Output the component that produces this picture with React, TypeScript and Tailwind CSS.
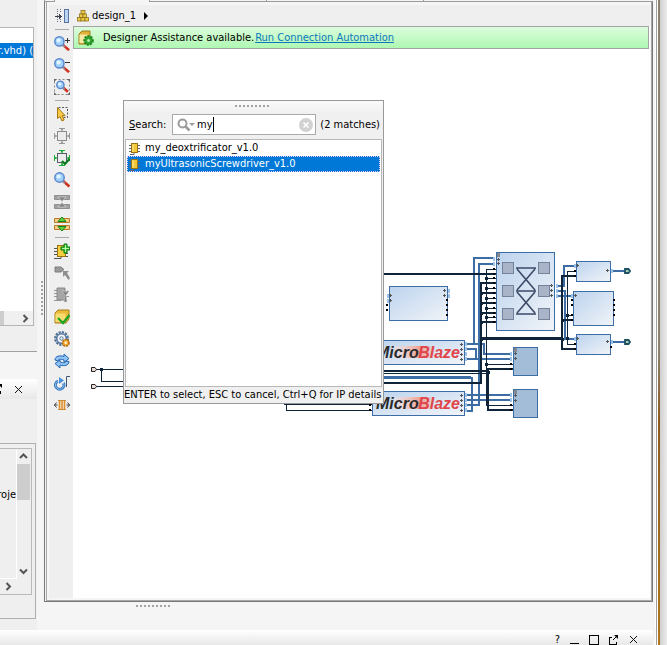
import React, { useState } from "react";

type IconProps = { children: React.ReactNode; crisp?: boolean };

function Icon16({ children, crisp }: IconProps) {
  return (
    <svg width="16" height="16" viewBox="0 0 16 16" fill="none" className="block shrink-0" shapeRendering={crisp ? "crispEdges" : "auto"} aria-hidden="true">
      {children}
    </svg>
  );
}

function Lens({ x = 0, y = 0, r = 4.6 }: { x?: number; y?: number; r?: number }) {
  const c = r + 0.8;
  return (
    <g transform={`translate(${x} ${y})`}>
      <path d={`M${c + r * 0.7} ${c + r * 0.7}L${c + r * 2.1} ${c + r * 1.9}`} stroke="#d0301c" strokeWidth="2.6" />
      <path d={`M${c + r * 0.7} ${c + r * 0.7 + 0.6}L${c + r * 1.2} ${c + r * 1.1 + 0.6}`} stroke="#8a95a5" strokeWidth="1.6" />
      <circle cx={c} cy={c} r={r} fill="#9fd2fb" stroke="#5d87cc" strokeWidth="1.5" />
      <circle cx={c - 0.8} cy={c - 1} r={r * 0.45} fill="#e3f5ff" />
    </g>
  );
}

function DockIcon() {
  return (
    <Icon16 crisp>
      <path d="M3 1v14M6 1v4M6 11v4" stroke="#6d737c" strokeDasharray="1 1" />
      <path d="M1 8h6" stroke="#39424e" />
      <path d="M5 5.5h1v1h1v1h1v1h-1v1h-1v1h-1z" fill="#39424e" />
      <rect x="10.5" y="1.5" width="4" height="13" fill="#b9d5f5" stroke="#58749c" />
    </Icon16>
  );
}

function ZoomInIcon() {
  return <Icon16><Lens y={1} /><path d="M13.5 3v5M11 5.5h5" stroke="#333" strokeWidth="1" shapeRendering="crispEdges" /></Icon16>;
}
function ZoomOutIcon() {
  return <Icon16><Lens y={1} /><path d="M11 5.5h5" stroke="#333" strokeWidth="1" shapeRendering="crispEdges" /></Icon16>;
}
function ZoomFitIcon() {
  return (
    <Icon16>
      <rect x="0.5" y="0.5" width="15" height="15" stroke="#888" strokeDasharray="2 2" />
      <path d="M0 0h3L0 3zM16 0v3l-3-3zM0 16v-3l3 3zM16 16h-3l3-3z" fill="#666" />
      <Lens x={2} y={1.5} r={3.6} />
    </Icon16>
  );
}
function SelectAreaIcon() {
  return (
    <Icon16>
      <rect x="4.5" y="1.5" width="9" height="10" stroke="#555" strokeDasharray="2 1.5" />
      <path d="M3.5 1.5v11l2.5-2 2 4.5 2.2-1-2-4.3h3z" fill="#f8ca45" stroke="#a77612" />
    </Icon16>
  );
}
function FitSelectionIcon({ color, arrow, check }: { color: string; arrow: string; check?: boolean }) {
  return (
    <Icon16>
      <rect x="3.5" y="3.5" width="9" height="9" fill="#ececec" stroke={color} />
      <path d="M5 0h6v1H9v1l-1 1.500L7 2V1H5zM5 16h6v-1H9v-1l-1-1.500L7 14v1H5zM0 5v6h1V9h1l1.500-1L2 7H1V5zM16 5v6h-1V9h-1l-1.500-1L14 7h1V5z" fill={arrow} />
      {check && <path d="M8 11l3 3 4.5-5" stroke="#0b7a1c" strokeWidth="2.2" />}
    </Icon16>
  );
}
function SearchIcon() {
  return <Icon16><Lens r={4.7} /></Icon16>;
}
function CollapseIcon() {
  return (
    <Icon16>
      <path d="M0.5 1.5h15v4h-15zM0.5 10.5h15v4h-15z" fill="#a2a2a2" stroke="#909090" />
      <path d="M4 3h8l-4 4.500zM4 13h8L8 8.500z" fill="#828282" stroke="#e0e0e0" strokeWidth="0.6" />
    </Icon16>
  );
}
function ExpandIcon() {
  return (
    <Icon16>
      <path d="M0.5 2.5h15v4h-15zM0.5 9.5h15v4h-15z" fill="#f8cf87" stroke="#bd7923" />
      <path d="M4 5.5h8L8 1zM4 10.5h8L8 15z" fill="#62d23c" stroke="#16801c" />
    </Icon16>
  );
}
function AddIpIcon() {
  return (
    <Icon16>
      <path d="M0 5.5h3M0 8.5h3M0 11.5h3M11 10.5h3M0 15.5h7v-2M12 13.5h2" stroke="#555" />
      <rect x="3.5" y="2.5" width="8" height="11" fill="#f6cf3e" stroke="#9b7412" />
      <path d="M10 1h3v3h3v3h-3v3h-3V7H7V4h3z" fill="#38c935" stroke="#0d7614" />
      <path d="M11.5 2v7M8 5.5h7" stroke="#baf6a4" />
    </Icon16>
  );
}
function PortIcon() {
  return (
    <Icon16>
      <path d="M1 2h6l3 2.5L7 7H1z" fill="#9a9a9a" stroke="#7d7d7d" />
      <path d="M9 6h6l-2 2 3 5-1.5 2-3.5-5-2 2z" fill="#8f8f8f" />
    </Icon16>
  );
}
function CustomizeIcon() {
  return (
    <Icon16>
      <path d="M0 3.5h3M0 6.5h3M0 9.5h3M0 13.5h7M11 4.5h4M11 9.5h4" stroke="#999" />
      <path d="M3 1h8v12H3z" fill="#a6a6a6" stroke="#8a8a8a" />
      <path d="M9 3v3l2 2-1 7h3l-1-7 2-2V3l-1.5 2h-2z" fill="#808080" stroke="#d5d5d5" strokeWidth="0.5" />
    </Icon16>
  );
}
function ValidateIcon() {
  return (
    <Icon16>
      <path d="M1 4l3-3h11v9l-3 4H1z" fill="#e9ba3b" stroke="#a57c17" />
      <path d="M1.5 4.5h10V13h-10z" fill="#f8dc70" />
      <path d="M4 9l5 5 6.5-8" stroke="#18a325" strokeWidth="2.2" />
    </Icon16>
  );
}
function GearsIcon() {
  return (
    <Icon16>
      <circle cx="7.5" cy="7.5" r="6.4" stroke="#4d6d93" strokeWidth="2" strokeDasharray="2.2 1.1" />
      <circle cx="7.5" cy="7.5" r="4.8" fill="#f2f6fb" stroke="#57779f" strokeWidth="1.6" />
      <circle cx="7.5" cy="7.5" r="1.7" stroke="#57779f" />
      <circle cx="11.8" cy="11.8" r="3.3" fill="#f6ab2e" stroke="#b56a12" strokeWidth="1.5" strokeDasharray="2 0.8" />
      <circle cx="11.8" cy="11.8" r="1.2" fill="#fff4dd" />
    </Icon16>
  );
}
function RefreshIcon() {
  return (
    <Icon16>
      <path d="M1 7c0-4 5-5 9-3.5V1l5 4.5-5 4V7C7 6 4 6 4 8z" fill="#8fc2f5" stroke="#2467b0" />
      <path d="M15 8.5c0 4-5 5-9 3.5V15l-5-4.5 5-3.5v2c3 1 6 1 6-1z" fill="#8fc2f5" stroke="#2467b0" />
    </Icon16>
  );
}
function RegenerateIcon() {
  return (
    <Icon16>
      <path d="M12.5 12V1.5H16" stroke="#3f5976" />
      <path d="M4 6a4.300 4.300 0 1 0 5.500 2" stroke="#2f74bd" strokeWidth="2.8" />
      <path d="M4 6a4.300 4.300 0 1 0 5.500 2" stroke="#90c4f4" strokeWidth="1" />
      <path d="M5 2l5 3.500L5 9z" fill="#4a91da" />
    </Icon16>
  );
}
function SpreadIcon() {
  return (
    <Icon16>
      <path d="M5.500 4v8M8 4v8M10.500 4v8" stroke="#e0902a" strokeWidth="1.600" />
      <path d="M4 3.5h8M4 12.5h8" stroke="#c98a38" />
      <path d="M0 8h3.500M12.500 8H16M2.500 5.500L0.500 8l2 2.500M13.500 5.500L15.500 8l-2 2.500" stroke="#444" />
    </Icon16>
  );
}

function ChipIcon() {
  return (
    <svg width="13" height="13" viewBox="0 0 13 13" fill="none" className="block shrink-0" aria-hidden="true">
      <path d="M1 3.5h2M1 6.5h2M1 9.5h2M9 3.5h3M9 6.5h3M9 9.5h3M2 12.5h4v-2" stroke="#666" />
      <rect x="3.5" y="1.5" width="6" height="9" fill="#f3c838" stroke="#9a7316" />
      <path d="M5 2.5v7" stroke="#fbe899" />
    </svg>
  );
}

function Separator() {
  return <div className="flex h-[5px] w-[14px] items-center"><div className="h-px w-full bg-[#a9a9a9]" /></div>;
}

const tools: ([string, React.ReactNode] | null)[] = [
  ["Dock", <DockIcon />],
  null,
  ["Zoom in", <ZoomInIcon />],
  ["Zoom out", <ZoomOutIcon />],
  ["Zoom fit", <ZoomFitIcon />],
  null,
  ["Select area", <SelectAreaIcon />],
  ["Fit selection", <FitSelectionIcon color="#8c8c8c" arrow="#9a9a9a" />],
  ["Autofit selection", <FitSelectionIcon color="#555e68" arrow="#1cae3c" check />],
  ["Search", <SearchIcon />],
  ["Collapse all", <CollapseIcon />],
  ["Expand all", <ExpandIcon />],
  null,
  ["Add IP", <AddIpIcon />],
  ["Make external", <PortIcon />],
  ["Customize block", <CustomizeIcon />],
  ["Validate design", <ValidateIcon />],
  ["Settings", <GearsIcon />],
  ["Refresh", <RefreshIcon />],
  ["Regenerate layout", <RegenerateIcon />],
  ["Optimize routing", <SpreadIcon />],
];

function Grip({ vertical }: { vertical?: boolean }) {
  return (
    <div className={vertical ? "flex flex-col gap-0.5" : "flex gap-0.5"}>
      {Array.from({ length: 9 }, (_, i) => <span key={i} className="size-0.5 bg-[#a3a3a3]" />)}
    </div>
  );
}

function Chevron({ dir }: { dir: "up" | "down" | "right" }) {
  const d = { up: "M1 6l3.5-3.5L8 6", down: "M1 2.5L4.5 6 8 2.5", right: "M2.5 1L6 4.5 2.5 8" }[dir];
  return <svg width="9" height="9" viewBox="0 0 9 9" fill="none" className="block" aria-hidden="true"><path d={d} stroke="#555" strokeWidth="2" /></svg>;
}

function CloseGlyph() {
  return <svg width="9" height="9" viewBox="0 0 9 9" className="block" aria-hidden="true"><path d="M1 1l7 7M8 1L1 8" stroke="#111" /></svg>;
}
function FloatGlyph() {
  return (
    <svg width="10" height="10" viewBox="0 0 10 10" fill="none" className="block shrink-0" aria-hidden="true">
      <path d="M3 2.5H0.5v7h7V7" stroke="#000" shapeRendering="crispEdges" />
      <path d="M5 0h4v4z" fill="#000" /><path d="M4 5l4-4" stroke="#000" />
    </svg>
  );
}

/* Left side: source list and properties panels */
function SidePanels() {
  return (
    <aside className="flex w-11 shrink-0 bg-[#f5f5f5]">
      <div className="flex w-[37px] shrink-0 flex-col overflow-hidden bg-[#efefef]">
        <div className="h-[27px] shrink-0" />
        <div className="flex h-[299px] w-[34px] shrink-0 flex-col border-y border-r border-[#b5b5b5] bg-white">
          <div className="mt-[15px] flex h-[15px] items-center justify-end overflow-hidden whitespace-pre bg-[#0078d7] text-white">r.vhd) (</div>
          <div className="flex-1" />
          <div className="flex h-[14px] bg-[#f0f0f0]">
            <div className="w-1 bg-[#cdcdcd]" />
            <button type="button" aria-label="Scroll right" className="ml-auto flex w-[15px] items-center justify-center"><Chevron dir="right" /></button>
          </div>
        </div>
        <div className="h-[25px] shrink-0" />
        <div className="h-px shrink-0 bg-[#a0a0a0]" />
        <div className="h-[27px] shrink-0 bg-[#f5f5f5]" />
        <div className="flex h-5 shrink-0 items-center justify-end gap-[11px] bg-linear-to-b from-white to-[#e8e8e8] pr-[14px]">
          <button type="button" aria-label="Float panel"><FloatGlyph /></button>
          <button type="button" aria-label="Close panel"><CloseGlyph /></button>
        </div>
        <div className="h-11 shrink-0" />
        <div className="h-[176px] w-[36px] shrink-0 border-y border-r border-[#b0b0b0] py-1 pr-[3px]">
          <div className="flex h-[147px] border-y border-r border-[#b9b9b9]">
            <div className="flex w-[17px] flex-col overflow-hidden">
              <div className="flex flex-1 justify-end border-r border-b border-white pt-[39px]">roje</div>
              <button type="button" aria-label="Scroll right" className="flex h-[15px] items-center justify-center"><Chevron dir="right" /></button>
            </div>
            <div className="flex w-[13px] flex-col items-center pb-[15px]">
              <button type="button" aria-label="Scroll up" className="flex h-[15px] items-center"><Chevron dir="up" /></button>
              <div className="h-9 w-full bg-[#cdcdcd]" />
              <button type="button" aria-label="Scroll down" className="mt-auto flex h-[15px] items-center"><Chevron dir="down" /></button>
            </div>
          </div>
        </div>
      </div>
      <div className="flex w-[7px] justify-center pt-[281px] pl-[3px]"><Grip vertical /></div>
    </aside>
  );
}

const BUS = "#3c6ea5";
const NET = "#0f2438";

type Wire = [string, number];
const busWires: Wire[] = [
  ["M384 378H472V411H466", 2], ["M384 377H471", 3], ["M466 344H474V258H494", 2], ["M466 405H479V264H494", 2],
  ["M466 344H484V354H511", 2], ["M466 349H476V359H511", 2], ["M466 359H511", 2],
  ["M466 395H511", 2], ["M466 400H511", 2], ["M557 286H564V266H575", 2], ["M557 291H565V339H575", 2],
  ["M557 296H573", 2], ["M612 271H625", 2], ["M612 342H625", 2],
];
const netWires: Wire[] = [
  ["M384 274H496", 2], ["M384 371H488V410H513", 2], ["M384 373.5H486", 1], ["M384 383H481V283H496", 2],
  ["M481 339H562V276H576M562 339V349H576M562 320H573", 2], ["M481 338.5H562", 3], ["M496 269.5H486.5V405.5H513", 1],
  ["M486.5 364.5H513", 1], ["M576 271.5H567.5V344.5H576M567.5 315.5H573", 1],
  ["M488 371V369H513", 2],
  ["M481 293H496M481 303H496M481 313H496M481 322H496", 2],
  ["M486.5 278.5H496M486.5 288.5H496M486.5 298.5H496M486.5 308.5H496M486.5 317.5H496", 1],
  ["M96 369.5H124M101.5 369.5V381.5H124M96 386.5H124", 1],
  ["M284 404.5H372M286.5 404V410.5H372", 1],
];
const junctions = [
  [101, 369], [481, 293], [481, 303], [481, 313], [481, 322], [481, 339], [486, 278], [486, 288], [486, 298],
  [486, 308], [486, 317], [486, 338], [486, 364], [488, 372], [562, 320], [562, 339], [567, 315], [567, 338],
];
const pins = [
  ...[269, 274, 278, 283, 288, 293, 298, 303, 308, 313, 317, 322].map((y) => [494, y]),
  ...[364, 369, 405, 410].map((y) => [511, y]),
  ...[305, 310].map((y) => [387, y]), ...[300, 305, 310, 315].map((y) => [447, y]),
  ...[300, 305, 315, 320].map((y) => [572, y]), ...[300, 305, 310, 315].map((y) => [614, y]),
  [575, 271], [575, 276], [575, 344], [575, 349], [611, 347], [370, 405], [370, 410],
];
const busPins = [
  [493, 259], [493, 264], [387, 296], [387, 301], [448, 291], [448, 296], [465, 344], [465, 349], [465, 354], [465, 359],
  [465, 395], [465, 400], [465, 405], [465, 410], [510, 354], [510, 359], [510, 395], [510, 400], [556, 286],
  [556, 291], [556, 296], [574, 266], [571, 296], [574, 339], [611, 271], [611, 342],
];
const expanders = [
  [390, 295], [390, 300], [444, 290], [444, 295], [461, 344], [461, 349], [461, 354], [461, 359], [461, 395], [461, 400],
  [461, 405], [461, 410], [498, 259], [498, 263], [551, 285], [551, 290], [551, 295], [577, 265], [607, 270], [575, 295],
  [577, 338], [607, 341], [515, 353], [515, 358], [515, 395], [515, 400],
];

function MicroBlaze({ y }: { y: number }) {
  return (
    <g>
      <rect x="372.5" y={y + 0.5} width="92" height="24" rx="1" fill="url(#block)" stroke={BUS} shapeRendering="crispEdges" />
      <rect x="394" y={y + 6} width="42" height="12" fill="url(#glow)" />
      <text x="376" y={y + 18} fontFamily="Liberation Sans, sans-serif" fontWeight="bold" fontStyle="italic" fontSize="16" fill="#2b2b2b">Micro</text>
      <text x="460" y={y + 18} textAnchor="end" fontFamily="Liberation Sans, sans-serif" fontWeight="bold" fontStyle="italic" fontSize="16" fill="#e0454a">Blaze</text>
    </g>
  );
}

function BlockDiagram() {
  return (
    <svg width="577" height="550" viewBox="73 49 577 550" fill="none" className="absolute top-0 left-0" role="img" aria-label="Block design">
      <defs>
        <linearGradient id="block" x1="0" y1="0" x2="1" y2="1"><stop offset="0" stopColor="#bcd3ee" /><stop offset="1" stopColor="#f1f4f8" /></linearGradient>
        <linearGradient id="glow" x1="0" y1="0" x2="1" y2="0"><stop offset="0" stopColor="#fbe3dd" stopOpacity="0.4" /><stop offset="0.6" stopColor="#f2a193" /><stop offset="1" stopColor="#f2a193" stopOpacity="0" /></linearGradient>
      </defs>
      <g shapeRendering="crispEdges">
        {busWires.map(([d, w], i) => <path key={i} d={d} stroke={BUS} strokeWidth={w} />)}
        {netWires.map(([d, w], i) => <path key={i} d={d} stroke={NET} strokeWidth={w} />)}
        {junctions.map(([x, y], i) => <rect key={i} x={x - 1} y={y - 1} width="3" height="3" fill={NET} />)}
        <rect x="389.5" y="286.5" width="58" height="34" fill="url(#block)" stroke={BUS} />
        <rect x="496.5" y="252.5" width="58" height="78" rx="1" fill="url(#block)" stroke={BUS} />
        <rect x="576.5" y="261.5" width="34" height="20" rx="1" fill="url(#block)" stroke={BUS} />
        <rect x="573.5" y="291.5" width="40" height="34" rx="1" fill="url(#block)" stroke={BUS} />
        <rect x="576.5" y="334.5" width="34" height="20" rx="1" fill="url(#block)" stroke={BUS} />
        <rect x="513.5" y="347.5" width="24" height="28" fill="#a3bcd7" stroke={BUS} />
        <rect x="513.5" y="389.5" width="24" height="28" fill="#a3bcd7" stroke={BUS} />
        {[262, 285, 308].map((y) => [502, 538].map((x) => <rect key={`${x}-${y}`} x={x + 0.5} y={y + 0.5} width="11" height="11" fill="#a9b4c8" stroke="#74839b" />))}
        {[[497, 253], [514, 348], [514, 390]].map(([x, y]) => <rect key={y} x={x} y={y} width="3" height="4" fill="#85888c" />)}
      </g>
      <path d="M516 268h20M516 291h20M516 314h20M517 269l18 21M535 269l-18 21M517 292l18 21M535 292l-18 21" stroke="#3d4a68" strokeWidth="1.6" />
      <MicroBlaze y={340} />
      <MicroBlaze y={391} />
      <g shapeRendering="crispEdges">
        {pins.map(([x, y], i) => <rect key={i} x={x - 1} y={y - 1} width="2" height="2" fill="#000" />)}
        {busPins.map(([x, y], i) => <rect key={i} x={x} y={y - 2} width="2" height="4" fill="#9dc3ea" />)}
        {expanders.map(([x, y], i) => <path key={i} d={`M${x - 1} ${y + 0.5}h3M${x + 0.5} ${y - 1}v3`} stroke="#555" />)}
      </g>
      {[369, 386].map((y) => <path key={y} d={`M91.5 ${y - 1.5}h3.5l1.5 2-1.5 2h-3.5z`} fill="#ead9d5" stroke="#222" />)}
      {[271, 342].map((y) => <path key={y} d={`M625 ${y - 2}h3.5l1.5 2-1.5 2h-3.5z`} fill="#a9cdb8" stroke="#1b5160" strokeWidth="1.8" />)}
    </svg>
  );
}

const results = ["my_deoxtrificator_v1.0", "myUltrasonicScrewdriver_v1.0"];

/* Floating IP catalog search */
function IpSearch() {
  const [query, setQuery] = useState("my");
  return (
    <div role="dialog" aria-label="Add IP" className="absolute top-[51px] left-[50px] flex h-[304px] w-[261px] flex-col border border-[#999] bg-[#f0f0f0]">
      <div className="flex h-[13px] items-center justify-center bg-linear-to-b from-[#fafafa] to-[#f0f0f0] pr-1 pb-1"><Grip /></div>
      <div className="flex h-[21px] items-center pr-[3px] pl-[5px]">
        <label htmlFor="ip-query" className="w-[43px] whitespace-nowrap"><span className="underline">S</span>earch:</label>
        <div className="relative flex h-[21px] flex-1 items-center border border-[#aaa] bg-white pr-[2px] pl-1">
          <svg width="19" height="14" viewBox="0 0 19 14" fill="none" className="shrink-0" aria-hidden="true">
            <circle cx="5.5" cy="5.5" r="4" stroke="#9b9b9b" strokeWidth="2" /><path d="M8.5 8.5l4 4" stroke="#9b9b9b" strokeWidth="2.5" />
            <path d="M12 5h6l-3 3z" fill="#9b9b9b" />
          </svg>
          <input id="ip-query" value={query} onChange={(e) => setQuery(e.target.value)} className="ml-px w-0 flex-1 outline-none" />
          <span className="absolute left-[40px] h-[15px] w-px bg-black" />
          <button type="button" aria-label="Clear search" onClick={() => setQuery("")} className="shrink-0">
            <svg width="14" height="14" viewBox="0 0 14 14" className="block" aria-hidden="true"><circle cx="7" cy="7" r="7" fill="#d2d2d2" /><path d="M4.5 4.5l5 5M9.5 4.5l-5 5" stroke="#fff" strokeWidth="1.6" /></svg>
          </button>
        </div>
        <span className="pl-[4px] whitespace-nowrap">(2 matches)</span>
      </div>
      <ul role="listbox" aria-label="Matching IP" className="mx-px mt-1 flex-1 border border-[#b8b8b8] bg-white px-px">
        {results.map((name, i) => (
          <li key={name} role="option" aria-selected={i === 1} className={`flex h-4 items-center gap-1 ${i === 1 ? "border border-dotted border-[#e8c8ff] bg-[#0078d7] text-white" : "border border-transparent"}`}>
            <ChipIcon />{name}
          </li>
        ))}
      </ul>
      <div className="flex h-4 items-center whitespace-nowrap">ENTER to select, ESC to cancel, Ctrl+Q for IP details</div>
    </div>
  );
}

function DesignPanel() {
  return (
    <main className="flex min-w-0 flex-1 flex-col">
      <div className="flex h-0.5 shrink-0 border-l border-[#9a9a9a] bg-[#f5f5f5]">
        <div className="w-[10px] border-r border-b border-[#9a9a9a]" />
        <div className="w-[94px]" />
        <div className="w-[117px] border-b border-l border-[#9a9a9a]" />
        <div className="w-[157px] border-b border-l border-[#9a9a9a]" />
        <div className="flex-1 border-b border-l border-[#9a9a9a]" />
      </div>
      <div className="flex min-h-0 flex-1 border-x border-b border-[#777] pl-px">
        <div className="flex min-w-0 flex-1 border-x border-b border-[#a8a8a8] bg-[#f5f5f5] pt-[3px] pr-px pb-0.5 pl-0.5">
          <div role="toolbar" aria-label="Design tools" className="flex w-6 shrink-0 flex-col items-center bg-[#efefef] pl-px">
            {tools.map((t, i) => t ? (
              <button key={t[0]} type="button" aria-label={t[0]} title={t[0]} className="flex h-[22px] w-full shrink-0 items-center justify-center">{t[1]}</button>
            ) : <Separator key={i} />)}
          </div>
          <section className="flex min-w-0 flex-1 flex-col bg-white">
            <div className="flex h-[21px] shrink-0 items-center gap-[3px] bg-[#efefef] pl-1">
              <svg width="12" height="12" viewBox="0 0 12 12" fill="#edcb46" stroke="#8e711c" strokeWidth="0.8" className="block" aria-hidden="true">
                <rect x="4" y="0.5" width="4" height="3.5" /><rect x="2.5" y="4" width="3.5" height="3.5" /><rect x="6" y="4" width="3.5" height="3.5" />
                <rect x="0.5" y="7.5" width="3.5" height="3.5" /><rect x="4" y="7.5" width="4" height="3.5" /><rect x="8" y="7.5" width="3.5" height="3.5" />
              </svg>
              <span>design_1</span>
              <svg width="6" height="8" viewBox="0 0 6 8" className="ml-1 block" aria-hidden="true"><path d="M1 0v8l4-4z" /></svg>
            </div>
            <div className="mr-px flex h-[23px] shrink-0 items-center border border-[#a3a3a3] bg-linear-to-b from-[#dcfcdc] to-[#aef8b2] pl-1">
              <Icon16>
                <path d="M1 4l3-3h8v9l-2 4H1z" fill="#e1b237" stroke="#9c7c1e" /><path d="M1.5 4.5h8V13h-8z" fill="#f7e8a4" />
                <circle cx="10.5" cy="10.5" r="4.4" fill="#2fa32e" stroke="#22831f" strokeWidth="1.8" strokeDasharray="2 1.2" /><circle cx="10.5" cy="10.5" r="1.5" fill="#b7efb0" />
              </Icon16>
              <span className="ml-[9px]">Designer Assistance available.</span>
              <a href="#connect" className="ml-px text-[#0a78bd] underline">Run Connection Automation</a>
            </div>
            <div className="relative flex-1 overflow-hidden">
              <BlockDiagram />
              <IpSearch />
            </div>
          </section>
        </div>
      </div>
      <div className="flex h-7 shrink-0 bg-[#f5f5f5] pt-[3px] pl-[92px]"><Grip /></div>
    </main>
  );
}

export default function App() {
  return (
    <div className="flex h-screen overflow-hidden bg-[#f5f5f5] font-['DejaVu_Sans_Condensed','Liberation_Sans',sans-serif] text-[11px] leading-[14px] text-black">
      <div className="flex min-w-0 flex-1 flex-col">
        <div className="flex min-h-0 flex-1">
          <SidePanels />
          <DesignPanel />
        </div>
        <div className="flex h-[15px] shrink-0 items-start justify-end gap-[10px] overflow-hidden bg-linear-to-b from-white to-[#e8e8e8] pt-[5px] pr-[15px]">
          <button type="button" aria-label="Help" className="leading-[10px]">?</button>
          <button type="button" aria-label="Minimize" className="pt-[8px]"><div className="h-px w-[9px] bg-black" /></button>
          <button type="button" aria-label="Maximize"><div className="size-[10px] border border-black" /></button>
          <button type="button" aria-label="Float"><FloatGlyph /></button>
          <button type="button" aria-label="Close"><CloseGlyph /></button>
        </div>
      </div>
      <div className="flex w-[14px] shrink-0 border-l-2 border-[#f5f5f5]">
        <div className="w-px bg-white" />
        <div className="w-px bg-[#a0a0a0]" />
        <div className="w-px bg-white" />
        <div className="w-0.5 bg-linear-to-b from-[#8a7f68] from-55% via-[#8d5a1c] via-65% to-[#b0771e]" />
        <div className="flex-1 bg-linear-to-r from-[#cfcfcf] to-[#ececec]" />
      </div>
    </div>
  );
}
